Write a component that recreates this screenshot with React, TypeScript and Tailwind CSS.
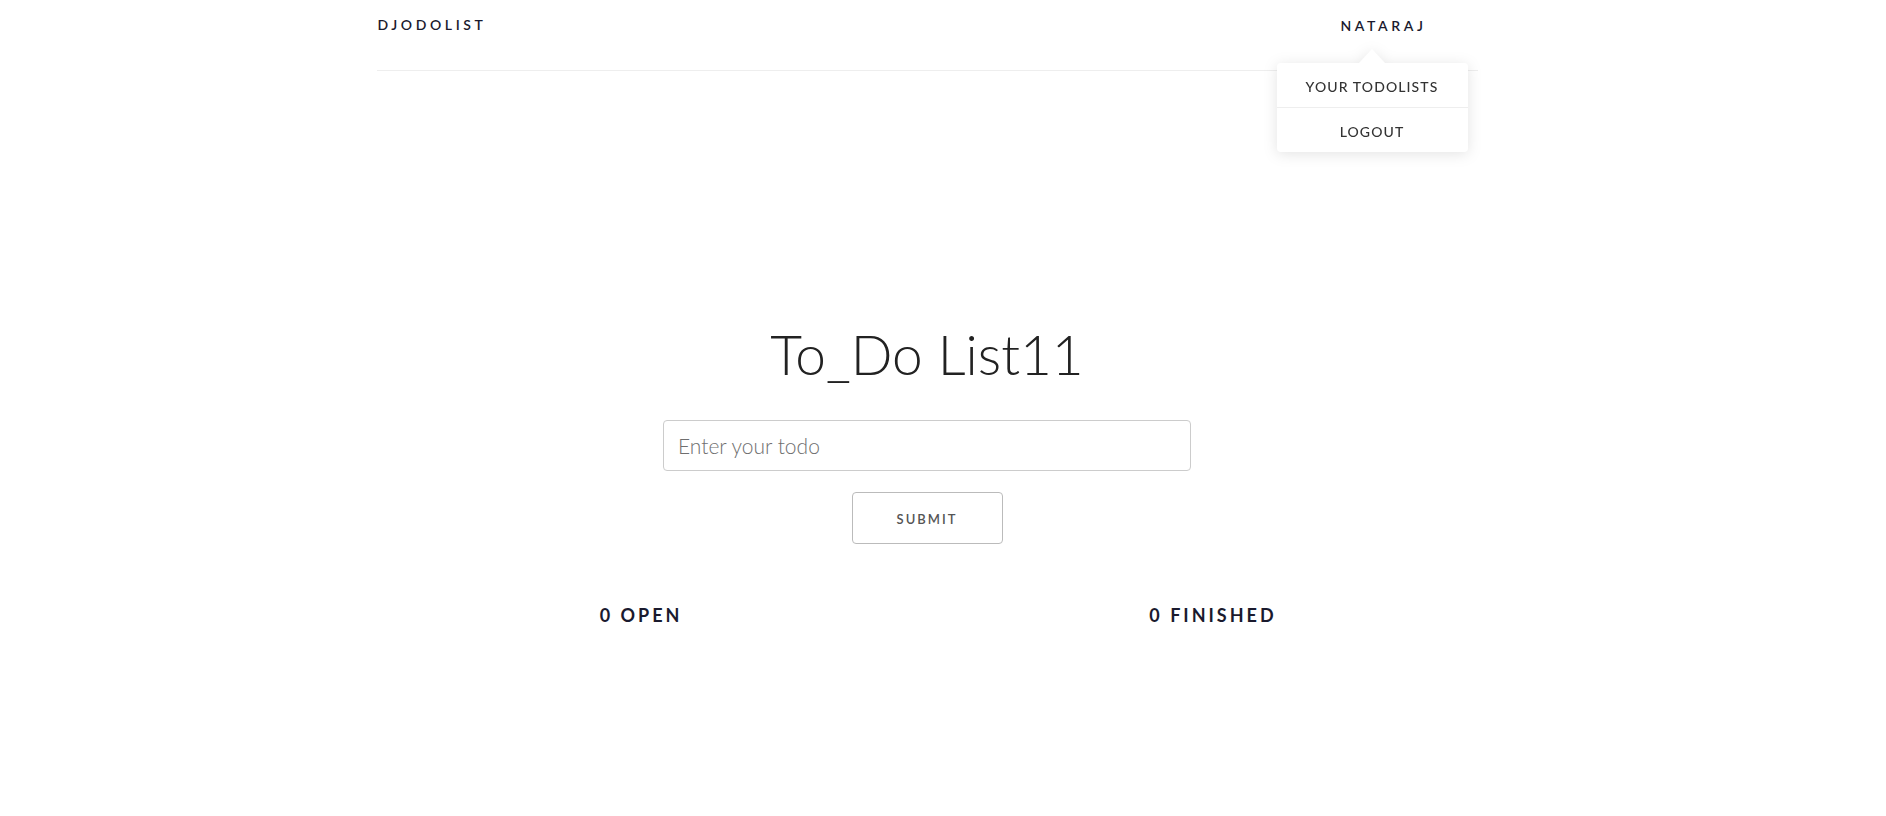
import { useState } from "react";

function UserMenu() {
  return (
    <div className="relative mr-[51px] leading-[20px]">
      <span className="text-[14px] font-semibold tracking-[3.6px] text-[#1a1a2e]">NATARAJ</span>

      {/* Dropdown */}
      <div className="absolute right-[-41px] top-[34px] z-10 w-[191px] drop-shadow-[0_2px_7px_rgba(0,0,0,0.11)]">
        <div className="mx-auto h-0 w-0 border-x-[13px] border-b-[14px] border-x-transparent border-b-white" />
        <div className="rounded-[4px] bg-white text-[14px] font-medium tracking-[1.1px] text-[#333]">
          <div className="flex h-[45px] items-center justify-center border-b border-[#eee] pt-[3px]">YOUR TODOLISTS</div>
          <div className="flex h-[44px] items-center justify-center pt-[3px]">LOGOUT</div>
        </div>
      </div>
    </div>
  );
}

export default function App() {
  const [todo, setTodo] = useState("");

  return (
    <div className="min-h-[816px] w-[1854px] bg-white font-['Lato',sans-serif] text-[#222]">
      <div className="mx-auto w-[1101px]">
        {/* Navbar */}
        <header className="flex h-[71px] items-start justify-between border-b border-[#eee] pl-px pt-[15px]">
          <span className="text-[14px] font-semibold leading-[20px] tracking-[3.6px] text-[#1a1a2e]">DJODOLIST</span>
          <UserMenu />
        </header>

        {/* Todo form */}
        <main className="flex flex-col items-center">
          <h1 className="mt-[256px] text-[55px] font-light leading-none text-[#222]">To_Do List11</h1>

          <input
            value={todo}
            onChange={(e) => setTodo(e.target.value)}
            placeholder="Enter your todo"
            className="mt-[38px] h-[51px] w-[528px] rounded-[4px] border border-[#ccc] px-[14px] text-[21px] font-light text-[#333] outline-none placeholder:text-[#6f6f6f]"
          />

          <button className="mt-[21px] h-[52px] w-[151px] rounded-[4px] border border-[#bbb] bg-white pt-[3px] text-[13px] font-semibold tracking-[2px] text-[#555]">
            SUBMIT
          </button>

          <div className="mt-[58px] grid w-[1144px] grid-cols-2 text-[18px] font-bold tracking-[3px] text-[#1a1a2e]">
            <div className="text-center">0 OPEN</div>
            <div className="text-center">0 FINISHED</div>
          </div>
        </main>
      </div>
    </div>
  );
}
